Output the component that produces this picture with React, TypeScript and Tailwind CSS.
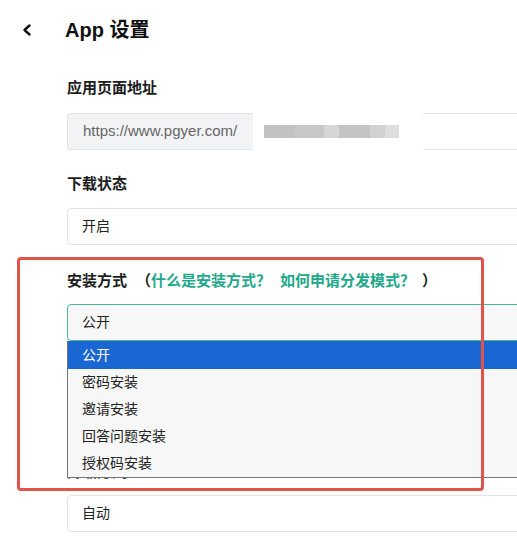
import { ReactNode } from "react";

const FONT = "font-['Liberation_Sans','Noto_Sans_CJK_SC',sans-serif]";

const OPTIONS = ["公开", "密码安装", "邀请安装", "回答问题安装", "授权码安装"];

const BLUR_BLOCKS = [
  { w: 30, color: "bg-[#c2c2c2]" },
  { w: 30, color: "bg-[#c7c7c7]" },
  { w: 15, color: "bg-[#d6d6d6]" },
  { w: 31, color: "bg-[#c4c4c4]" },
  { w: 15, color: "bg-[#d1d1d1]" },
  { w: 14, color: "bg-[#dedede]" },
];

function Label({ children, className = "" }: { children: ReactNode; className?: string }) {
  return (
    <div className={`h-5 text-[15px] font-bold leading-5 text-[#1c1c1c] ${className}`}>
      {children}
    </div>
  );
}

function TextBox({ value, className = "" }: { value: string; className?: string }) {
  return (
    <div
      className={`flex h-[37px] w-[480px] items-center rounded-[4px] border border-[#e3e3e3] bg-white px-[14px] text-[14px] text-[#222] ${className}`}
    >
      {value}
    </div>
  );
}

function UrlField() {
  return (
    <div className="mt-[15px] flex h-[37px] w-[480px]">
      <div className="flex w-[186px] items-center rounded-l-[4px] border border-r-0 border-[#e3e3e3] bg-[#f2f3f5] pl-[15px] text-[15px] text-[#666]">
        https://www.pgyer.com/
      </div>
      <div className="flex w-[170px] items-center bg-white pl-[11px]">
        <div className="flex h-[13px] blur-[0.6px]">
          {BLUR_BLOCKS.map((b, i) => (
            <div key={i} className={b.color} style={{ width: b.w }} />
          ))}
        </div>
      </div>
      <div className="flex-1 border border-l-0 border-[#e3e3e3] bg-white" />
    </div>
  );
}

function InstallSelect() {
  return (
    <div className="relative mt-[13px] w-[480px]">
      <div className="flex h-[37px] items-center rounded-[4px] border border-[#47b99b] bg-[#f8f8f8] px-[14px] text-[14px] text-[#222]">
        公开
      </div>
      <ul className="absolute left-0 top-full z-10 w-full border border-t-0 border-[#777] bg-[#f7f7f7] text-[14px] text-[#222]">
        {OPTIONS.map((opt, i) => (
          <li
            key={opt}
            className={
              i === 0
                ? "flex h-[28px] items-center bg-[#1a66d2] pl-[14px] text-white"
                : "flex h-[27px] items-center pl-[14px]"
            }
          >
            {opt}
          </li>
        ))}
      </ul>
    </div>
  );
}

export default function App() {
  return (
    <div className={`relative h-[560px] w-[517px] overflow-hidden bg-white ${FONT}`}>
      <header className="flex h-[60px] items-center">
        <div className="flex w-[65px] pl-[21px]">
          <svg width="12" height="14" viewBox="0 0 12 14" fill="none">
            <path d="M8.5 2.5 L3.5 7 L8.5 11.5" stroke="#111" strokeWidth="2.4" strokeLinecap="round" strokeLinejoin="round" />
          </svg>
        </div>
        <h1 className="text-[20px] font-bold text-[#111]">App 设置</h1>
      </header>

      <main className="pl-[67px]">
        <Label className="mt-[18px]">应用页面地址</Label>
        <UrlField />

        <Label className="mt-[24px]">下载状态</Label>
        <TextBox value="开启" className="mt-[14px]" />

        <Label className="mt-[26px]">
          安装方式
          <span className="ml-[9px]">（</span>
          <span className="text-[#1ea78a]">什么是安装方式？</span>
          <span className="ml-[9px] text-[#1ea78a]">如何申请分发模式？</span>
          <span className="ml-[7px]">）</span>
        </Label>
        <InstallSelect />

        <Label className="mt-[121px]">升级方式</Label>
        <TextBox value="自动" className="mt-[13px]" />
      </main>

      <div className="pointer-events-none absolute left-[17px] top-[257px] z-20 h-[234px] w-[467px] rounded-[4px] border-[3px] border-[#e0544c]" />
    </div>
  );
}
